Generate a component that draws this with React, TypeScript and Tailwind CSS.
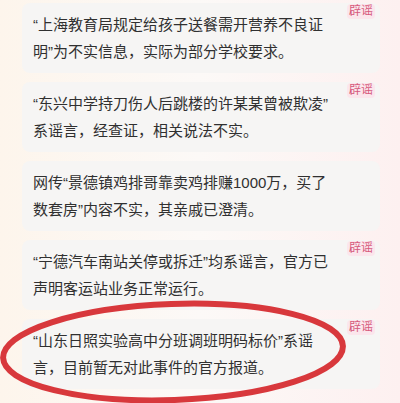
import React from 'react';

interface RumorItem {
    lines: string[];
    badge: boolean;
}

const items: RumorItem[] = [
    { lines: ['“上海教育局规定给孩子送餐需开营养不良证', '明”为不实信息，实际为部分学校要求。'], badge: true },
    { lines: ['“东兴中学持刀伤人后跳楼的许某某曾被欺凌”', '系谣言，经查证，相关说法不实。'], badge: true },
    { lines: ['网传“景德镇鸡排哥靠卖鸡排赚1000万，买了', '数套房”内容不实，其亲戚已澄清。'], badge: false },
    { lines: ['“宁德汽车南站关停或拆迁”均系谣言，官方已', '声明客运站业务正常运行。'], badge: true },
    { lines: ['“山东日照实验高中分班调班明码标价”系谣', '言，目前暂无对此事件的官方报道。'], badge: true },
];

const RumorCard: React.FC<{ item: RumorItem }> = ({ item }) => {
    return (
        <div className="relative h-[70px] rounded-lg bg-[#f6f5f4] pl-[11px] pt-[8px]">
            {item.lines.map((line, i) => (
                <div key={i} className="whitespace-nowrap text-[15px] leading-[27px] text-[#303030]">
                    {line}
                </div>
            ))}
            {item.badge && (
                <span className="absolute right-[5px] top-[1px] rounded-sm bg-[#fbe6ec] px-[2px] text-[12px] leading-[15px] text-[#d65a7c]">
                    辟谣
                </span>
            )}
        </div>
    );
};

export default function App() {
    return (
        <div
            className="relative h-[403px] w-[400px] overflow-hidden bg-gradient-to-r from-[#fdf5ec] via-[#fcf9f7] to-[#fdf0f0]"
            style={{ fontFamily: '"Liberation Sans", "Noto Sans CJK SC", sans-serif' }}
        >
            <div className="flex flex-col gap-[9px] pl-[22px] pr-[20px] pt-[3px]">
                {items.map((item, i) => (
                    <RumorCard key={i} item={item} />
                ))}
            </div>

            {/* hand-drawn red circle */}
            <svg className="pointer-events-none absolute inset-0" width="400" height="403" viewBox="0 0 400 403">
                <ellipse
                    cx="173"
                    cy="352"
                    rx="170"
                    ry="48"
                    transform="rotate(-2 173 352)"
                    fill="none"
                    stroke="#d8383c"
                    strokeWidth="6"
                />
            </svg>
        </div>
    );
}
